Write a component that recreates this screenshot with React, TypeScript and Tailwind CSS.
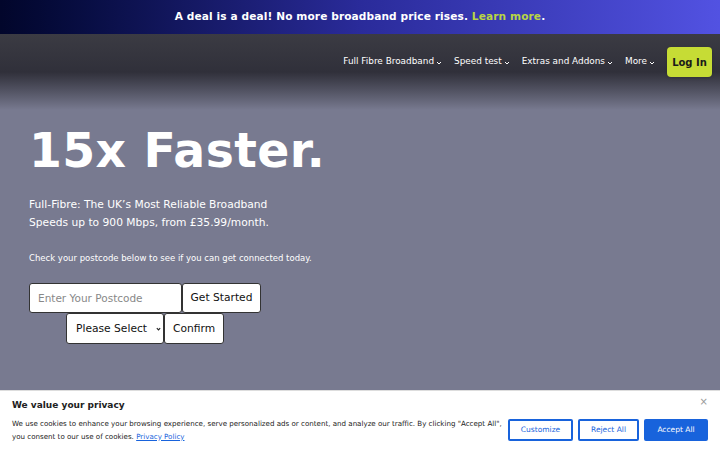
import React from 'react';

const navLinks = ['Full Fibre Broadband', 'Speed test', 'Extras and Addons', 'More'];

const Caret: React.FC = () => (
    <svg width="6" height="4" viewBox="0 0 6 4" className="ml-[2px] mt-[3px]" aria-hidden>
        <path d="M1 1l2 2 2-2" fill="none" stroke="currentColor" strokeWidth="1" />
    </svg>
);

export default function App() {
    return (
        <div className="relative w-[720px] h-[450px] overflow-hidden bg-[#787a90] font-['DejaVu_Sans',sans-serif]">
            {/* Promo strip */}
            <div className="h-[34px] flex items-center justify-center bg-gradient-to-r from-[#02062b] via-[#2a2b9a] to-[#5252e2]">
                <p className="text-[10.6px] font-bold text-white tracking-[0.1px]">
                    A deal is a deal! No more broadband price rises. <span className="text-[#b8d544]">Learn more</span>.
                </p>
            </div>

            {/* Header */}
            <header className="h-[76px] bg-gradient-to-b from-[#3b3b43] via-[#30303a] to-[#787a90] flex items-start justify-end pt-[13px] pr-[8px]">
                <nav className="flex items-center h-[30px] gap-[12px] pr-[12px]">
                    {navLinks.map((link) => (
                        <a key={link} className="flex items-center text-[8.9px] text-white">
                            {link}
                            <Caret />
                        </a>
                    ))}
                </nav>
                <button className="h-[30px] w-[45px] rounded-[4px] bg-[#c6dc35] text-[#1a1a1a] text-[10px] font-bold shadow-sm">
                    Log In
                </button>
            </header>

            {/* Hero */}
            <main className="px-[29px] pt-[17px]">
                <h1 className="text-[47.3px] leading-none font-bold text-white tracking-[0.4px]">15x Faster.</h1>
                <p className="mt-[22px] text-[10.7px] leading-[18px] text-white">
                    Full-Fibre: The UK’s Most Reliable Broadband
                    <br />
                    Speeds up to 900 Mbps, from £35.99/month.
                </p>
                <p className="mt-[20px] text-[8.5px] leading-[12px] text-white">Check your postcode below to see if you can get connected today.</p>

                <form className="mt-[19px] w-[232px] flex flex-wrap justify-center">
                    <input
                        placeholder="Enter Your Postcode"
                        className="w-[153px] h-[30px] px-[8px] bg-white border border-[#333] rounded-[3px] text-[10.5px] placeholder:text-[#888]"
                    />
                    <button type="button" className="w-[79px] h-[30px] bg-white border border-[#333] rounded-[3px] text-[10.7px] text-[#111]">
                        Get Started
                    </button>
                    <div className="relative">
                        <select className="appearance-none w-[98px] h-[31px] pl-[9px] bg-white border border-[#333] rounded-[3px] text-[10.7px] text-[#111]">
                            <option>Please Select</option>
                        </select>
                        <svg width="5" height="4" viewBox="0 0 6 4" className="absolute right-[3px] top-[14px] pointer-events-none" aria-hidden>
                            <path d="M1 1l2 2 2-2" fill="none" stroke="#222" strokeWidth="1.4" />
                        </svg>
                    </div>
                    <button type="button" className="w-[60px] h-[31px] bg-white border border-[#333] rounded-[3px] text-[10.7px] text-[#111]">
                        Confirm
                    </button>
                </form>
            </main>

            {/* Cookie consent */}
            <div className="absolute left-0 right-0 bottom-0 h-[60px] bg-white border-t border-[#ddd] px-[12px] pt-[8px]">
                <button className="absolute right-[12px] top-[3px] text-[10px] text-[#999]">×</button>
                <h2 className="text-[9px] font-bold text-[#212121]">We value your privacy</h2>
                <div className="flex items-start mt-[4px]">
                    <p className="w-[494px] text-[7.1px] leading-[13px] text-[#212121]">
                        We use cookies to enhance your browsing experience, serve personalized ads or content, and analyze our traffic. By clicking "Accept All", you consent to our use of cookies.{' '}
                        <a className="text-[#1863dc] underline">Privacy Policy</a>
                    </p>
                    <div className="ml-auto flex gap-[5px] mt-[2px]">
                        <button className="w-[65px] h-[22px] border-2 border-[#1863dc] rounded-[2px] text-[7.5px] text-[#1863dc]">Customize</button>
                        <button className="w-[61px] h-[22px] border-2 border-[#1863dc] rounded-[2px] text-[7.5px] text-[#1863dc]">Reject All</button>
                        <button className="w-[64px] h-[22px] border-2 border-[#1863dc] bg-[#1863dc] rounded-[2px] text-[7.5px] text-white">Accept All</button>
                    </div>
                </div>
            </div>
        </div>
    );
}
